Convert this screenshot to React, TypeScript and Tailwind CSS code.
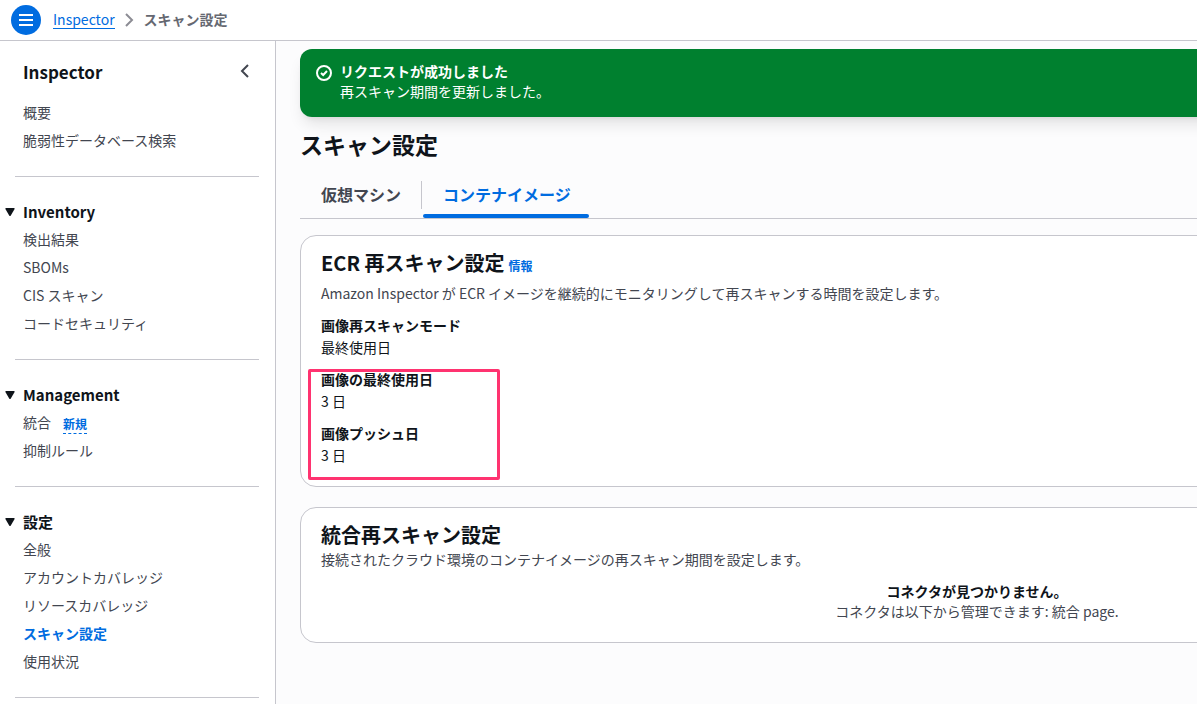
import { clsx } from 'clsx';

type NavItem = { label: string; badge?: string; active?: boolean };
type NavSection = { title?: string; items: NavItem[] };

const navSections: NavSection[] = [
  { items: [{ label: '概要' }, { label: '脆弱性データベース検索' }] },
  {
    title: 'Inventory',
    items: [
      { label: '検出結果' },
      { label: 'SBOMs' },
      { label: 'CIS スキャン' },
      { label: 'コードセキュリティ' },
    ],
  },
  {
    title: 'Management',
    items: [{ label: '統合', badge: '新規' }, { label: '抑制ルール' }],
  },
  {
    title: '設定',
    items: [
      { label: '全般' },
      { label: 'アカウントカバレッジ' },
      { label: 'リソースカバレッジ' },
      { label: 'スキャン設定', active: true },
      { label: '使用状況' },
    ],
  },
];

const rescanMode = { label: '画像再スキャンモード', value: '最終使用日' };

const rescanPeriods = [
  { label: '画像の最終使用日', value: '3 日' },
  { label: '画像プッシュ日', value: '3 日' },
];

function TopBar() {
  return (
    <header className="flex h-[41px] shrink-0 items-center border-b border-[#c6c6cd] bg-white pl-[11px]">
      <button
        type="button"
        aria-label="メニュー"
        className="flex size-[30px] items-center justify-center rounded-full bg-[#006ce0] text-white"
      >
        <svg viewBox="0 0 16 16" className="size-4" stroke="currentColor" strokeWidth="2" fill="none">
          <path d="M1 3h14M1 8h14M1 13h14" />
        </svg>
      </button>
      <nav aria-label="パンくずリスト" className="ml-3 flex items-center pb-0.5">
        <a href="#" className="border-b border-[#006ce0] leading-[18px] text-[#006ce0]">
          Inspector
        </a>
        <svg viewBox="0 0 16 16" className="mx-[6px] mt-0.5 size-4" stroke="#8c8c94" strokeWidth="2" fill="none">
          <path d="m5 2 6 6-6 6" />
        </svg>
        <span className="ml-px font-bold text-[#656871]">スキャン設定</span>
      </nav>
    </header>
  );
}

function Section({ section }: { section: NavSection }) {
  return (
    <section>
      {section.title && (
        <button type="button" className="flex h-7 items-center gap-2 pt-0.5 pl-[5px] text-[15px] font-bold text-[#0f141a]">
          <svg viewBox="0 0 10 8" className="h-2 w-[10px]" fill="currentColor">
            <path d="M1 0h8q1 0 .6.9L5.8 7.4q-.8 1.1-1.6 0L.4.9Q0 0 1 0z" />
          </svg>
          {section.title}
        </button>
      )}
      <ul>
        {section.items.map((item) => (
          <li key={item.label} className="flex h-7 items-center gap-3 pl-[23px]">
            <a href="#" className={clsx(item.active ? 'font-bold text-[#006ce0]' : 'text-[#424650]')}>
              {item.label}
            </a>
            {item.badge && (
              <button
                type="button"
                className="mt-1 border-b border-dashed border-[#006ce0] text-xs leading-[18px] font-bold text-[#006ce0]"
              >
                {item.badge}
              </button>
            )}
          </li>
        ))}
      </ul>
      <hr className="mt-[22px] mr-4 mb-5 ml-[15px] border-[#c6c6cd]" />
    </section>
  );
}

function SideNav() {
  return (
    <aside className="w-[276px] shrink-0 overflow-hidden border-r border-[#c6c6cd] bg-white">
      <div className="flex h-[57px] items-center justify-between pt-1.5 pr-[22px] pl-[23px]">
        <h2 className="text-[17px] font-bold text-[#0f141a]">Inspector</h2>
        <button type="button" aria-label="閉じる" className="mb-1">
          <svg viewBox="0 0 16 16" className="size-4" stroke="#424650" strokeWidth="2" fill="none">
            <path d="m11 2-6 6 6 6" />
          </svg>
        </button>
      </div>
      {navSections.map((section, i) => (
        <Section key={i} section={section} />
      ))}
    </aside>
  );
}

function Flash() {
  return (
    <div role="status" className="flex gap-2 rounded-xl bg-[#00802f] px-4 pt-3 pb-4 text-white shadow-lg">
      <svg viewBox="0 0 16 16" className="mt-1 size-4" stroke="currentColor" strokeWidth="2" fill="none">
        <circle cx="8" cy="8" r="7" />
        <path d="m5 8 2.2 2L11 6" />
      </svg>
      <div>
        <p className="font-bold">リクエストが成功しました</p>
        <p>再スキャン期間を更新しました。</p>
      </div>
    </div>
  );
}

function Tabs() {
  return (
    <div role="tablist" className="mt-[21px] flex border-b border-[#c6c6cd] text-base font-bold">
      <div className="flex items-start">
        <button
          type="button"
          role="tab"
          aria-selected="false"
          className="h-7 border-r border-[#c6c6cd] pr-5 pb-0.5 pl-[21px] text-[#424650]"
        >
          仮想マシン
        </button>
      </div>
      <button
        type="button"
        role="tab"
        aria-selected="true"
        className="relative ml-px h-[37px] pr-[18px] pb-[11px] pl-5 text-[#006ce0]"
      >
        コンテナイメージ
        <span className="absolute inset-x-0 bottom-0 h-1 rounded-sm bg-[#006ce0]" />
      </button>
    </div>
  );
}

function Field({ label, value }: { label: string; value: string }) {
  return (
    <div className="flex flex-col gap-[2px] text-[#0f141a]">
      <dt className="font-bold">{label}</dt>
      <dd>{value}</dd>
    </div>
  );
}

function EcrCard() {
  return (
    <section className="rounded-2xl border border-[#c6c6cd] bg-white px-5 pt-[13px] pb-[21px]">
      <div className="flex items-baseline gap-1">
        <h2 className="text-xl font-bold text-[#0f141a]">ECR 再スキャン設定</h2>
        <a href="#" className="text-xs font-bold text-[#006ce0]">
          情報
        </a>
      </div>
      <p className="mt-[6px] text-[#424650]">
        Amazon Inspector が ECR イメージを継続的にモニタリングして再スキャンする時間を設定します。
      </p>
      <dl className="mt-3 flex flex-col gap-3">
        <Field {...rescanMode} />
        <div className="relative flex flex-col gap-3">
          {rescanPeriods.map((field) => (
            <Field key={field.label} {...field} />
          ))}
          {/* highlight frame around the two periods */}
          <div className="pointer-events-none absolute top-0 -bottom-[15px] -left-[13px] w-48 rounded-xs border-3 border-[#ff3370]" />
        </div>
      </dl>
    </section>
  );
}

function IntegrationCard() {
  return (
    <section className="mt-5 rounded-2xl border border-[#c6c6cd] bg-white px-5 pt-[13px] pb-[21px]">
      <h2 className="text-xl font-bold text-[#0f141a]">統合再スキャン設定</h2>
      <p className="text-[#424650]">接続されたクラウド環境のコンテナイメージの再スキャン期間を設定します。</p>
      <div className="mt-3 text-center">
        <p className="font-bold text-[#0f141a]">コネクタが見つかりません。</p>
        <p className="text-[#424650]">コネクタは以下から管理できます: 統合 page.</p>
      </div>
    </section>
  );
}

export default function App() {
  return (
    <div className="flex h-screen flex-col overflow-hidden bg-[#fcfcfd] font-['Noto_Sans_CJK_JP',sans-serif] text-sm">
      <TopBar />
      <div className="flex min-h-0 flex-1">
        <SideNav />
        <main className="min-w-0 flex-1 overflow-hidden px-6 pt-2">
          {/* console content never gets narrower than this, the rest runs off to the right */}
          <div className="min-w-[1354px]">
            <Flash />
            <h1 className="mt-[11px] text-[23px] leading-8 font-bold text-[#0f141a]">スキャン設定</h1>
            <Tabs />
            <div className="mt-4">
              <EcrCard />
              <IntegrationCard />
            </div>
          </div>
        </main>
      </div>
    </div>
  );
}
